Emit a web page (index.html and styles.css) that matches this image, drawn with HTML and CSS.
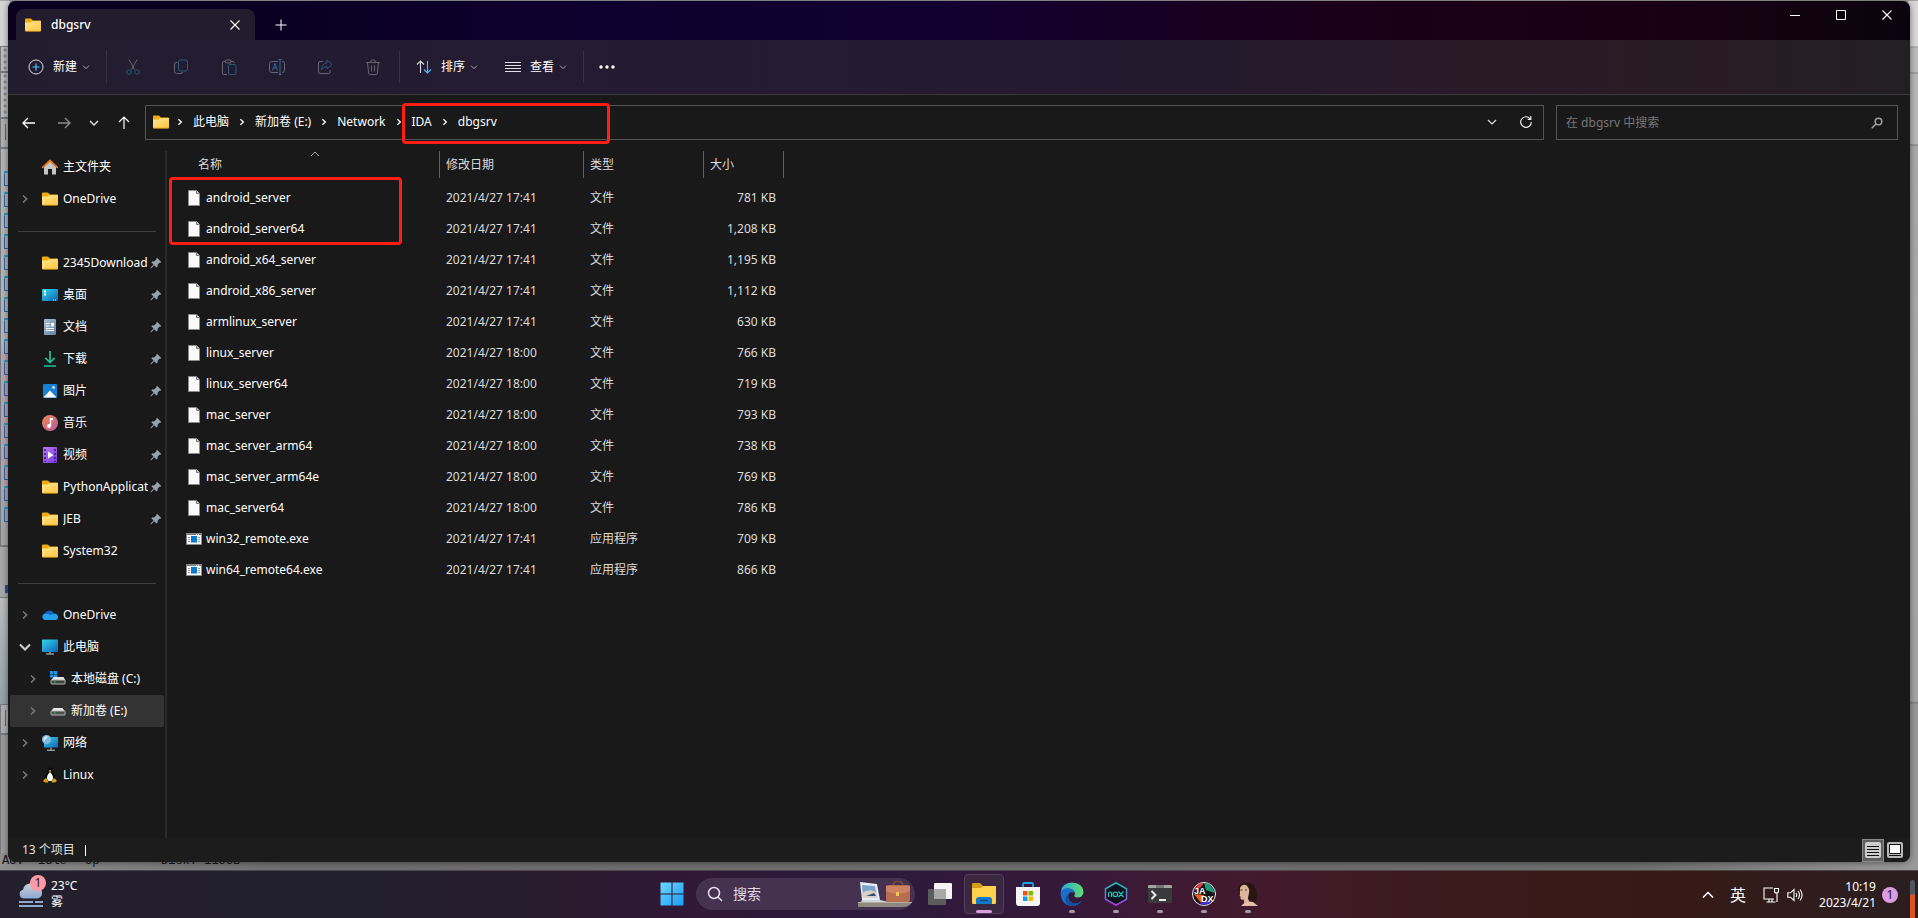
FILE: index.html
```html
<!DOCTYPE html>
<html lang="zh-CN">
<head>
<meta charset="utf-8">
<title>dbgsrv</title>
<link rel="stylesheet" href="styles.css">
</head>
<body>
<svg class="defs" aria-hidden="true">
  <defs>
    <linearGradient id="gFolder" x1="0" y1="0" x2="1" y2="1"><stop offset="0" stop-color="#ffe493"/><stop offset="1" stop-color="#ffc73e"/></linearGradient>
    <linearGradient id="gScreen" x1="0" y1="0" x2="1" y2="1"><stop offset="0" stop-color="#35d6ea"/><stop offset="1" stop-color="#0b63b8"/></linearGradient>
    <linearGradient id="gDoc" x1="0" y1="0" x2="1" y2="1"><stop offset="0" stop-color="#a9bdd2"/><stop offset="1" stop-color="#6683a4"/></linearGradient>
    <linearGradient id="gMusic" x1="0" y1="0" x2="1" y2="1"><stop offset="0" stop-color="#f0894f"/><stop offset="1" stop-color="#b45aa0"/></linearGradient>
    <linearGradient id="gVideo" x1="0" y1="0" x2="1" y2="1"><stop offset="0" stop-color="#b67bf3"/><stop offset="1" stop-color="#7a36dd"/></linearGradient>
    <linearGradient id="gWin" x1="0" y1="0" x2="1" y2="1"><stop offset="0" stop-color="#6ed5fb"/><stop offset="1" stop-color="#1a9df2"/></linearGradient>
    <linearGradient id="gEdge" x1="0" y1="0" x2="1" y2="0"><stop offset="0" stop-color="#2aa5dd"/><stop offset="1" stop-color="#5fdd6f"/></linearGradient>
    <linearGradient id="gNox" x1="0" y1="0" x2="0" y2="1"><stop offset="0" stop-color="#19c9c2"/><stop offset="1" stop-color="#b33be8"/></linearGradient>
    <linearGradient id="gCloud" x1="0" y1="0" x2="0" y2="1"><stop offset="0" stop-color="#c9ced6"/><stop offset="1" stop-color="#8fa9d0"/></linearGradient>
  </defs>
  <symbol id="folder" viewBox="0 0 16 14"><path d="M0 1.5Q0 .5 1 .5h4.5q.6 0 1 .5L8 2.5h7q1 0 1 1V8H0z" fill="#f0ab12"/><path d="M0 4.5h5.6L7.4 3H16v9.5q0 .8-1 .8H1q-1 0-1-.8z" fill="url(#gFolder)"/><path d="M0 12.2q0 1.3 1 1.3h14q1 0 1-1.3v.6H0z" fill="#e3a01a"/></symbol>
  <symbol id="chev-down" viewBox="0 0 8 8"><path d="M1 2.6l3 3 3-3" fill="none" stroke="currentColor"/></symbol>
  <symbol id="chev-right" viewBox="0 0 8 10"><path d="M2 1.5L5.7 5 2 8.5" fill="none" stroke="currentColor" stroke-width="1.6"/></symbol>
  <symbol id="close" viewBox="0 0 12 12"><path d="M1.5 1.5l9 9M10.5 1.5l-9 9" fill="none" stroke="currentColor" stroke-width="1.1"/></symbol>
  <symbol id="file" viewBox="0 0 16 16"><path d="M2.5.5h8l3 3v12h-11z" fill="#fafafa" stroke="#8b8b8b"/><path d="M10.5.5v3h3" fill="#ccc" stroke="#777"/></symbol>
  <symbol id="exe" viewBox="0 0 16 12"><path d="M.5.5h15v11H.5z" fill="#f8f8f8" stroke="#8a8a8a"/><path d="M1 1.5h14" stroke="#777"/><path d="M10 1.5h1m1 0h1" stroke="#fff"/><path d="M5 3h6v6.5H5z" fill="#0b78d4"/><path d="M2 4.5h2M2 6.5h2M2 8.5h2M12 4.5h2M12 6.5h2M12 8.5h2" stroke="#999"/></symbol>
  <symbol id="pin" viewBox="0 0 12 12"><path d="M7 .8L11.3 5l-1 .8-.6-.2-2 2-.2 2.2-.9.8-2.4-2.4L1 11.6l-.7-.7L3.5 7.6 1.3 5.3l.9-.9 2.3-.1 2-2-.2-.6z" fill="#97a2ab"/></symbol>
  <symbol id="home" viewBox="0 0 16 16"><path d="M2 7.5L8 2l6 5.5V15q0 .5-.5.5H10V10H6v5.5H2.5Q2 15.500 2 15z" fill="#c3c6c9"/><path d="M.8 8.300L8 1.500l7.200 6.800" fill="none" stroke="#e8731c" stroke-width="1.800" stroke-linecap="round" stroke-linejoin="round"/></symbol>
  <symbol id="desktop" viewBox="0 0 16 16"><rect y="2" width="16" height="12" rx="1" fill="url(#gScreen)"/><path d="M2 4.500h2M2 7.500h2" stroke="#fff" stroke-width="1.800"/><path d="M11 13h1m1 0h1" stroke="#cfe"/></symbol>
  <symbol id="doc" viewBox="0 0 16 16"><rect x="2" width="12" height="16" rx="1" fill="url(#gDoc)"/><path d="M4 4.500h3.500M4 7h3.500M4 9.500h8M4 11.500h8" stroke="#fff"/><path d="M9 4h3v3.500H9z" fill="#fff"/></symbol>
  <symbol id="download" viewBox="0 0 16 16"><path d="M8 0v11M3.300 6.800L8 11.500l4.700-4.700" fill="none" stroke="#22b890" stroke-width="1.800"/><path d="M2 15h12" stroke="#12a887" stroke-width="1.800"/></symbol>
  <symbol id="picture" viewBox="0 0 16 16"><rect x="1" y="1" width="14" height="14" rx="1" fill="#1780d2"/><path d="M1.500 14.500L8 7.500l6.500 7z" fill="#fff"/><circle cx="11.500" cy="4.500" r="1.300" fill="#fff"/></symbol>
  <symbol id="music" viewBox="0 0 16 16"><circle cx="8" cy="8" r="8" fill="url(#gMusic)"/><path d="M8.500 3v8" stroke="#fff" stroke-width="1.300"/><path d="M8.500 3h2.500v2.200H8.500z" fill="#fff"/><circle cx="7" cy="11" r="2" fill="#fff"/></symbol>
  <symbol id="video" viewBox="0 0 16 16"><rect x="1" width="14" height="16" rx="1" fill="url(#gVideo)"/><path d="M3 2v13M13 2v13" stroke="#3d1484" stroke-width="1.600" stroke-dasharray="2 2"/><path d="M6 4.500v7L11.500 8z" fill="#fff"/></symbol>
  <symbol id="cloud" viewBox="0 0 16 16"><path d="M3.500 13a3.500 3.500 0 0 1-.4-6.900A5 5 0 0 1 12 6.200L8 13z" fill="#0f66c4"/><path d="M3 13a3 3 0 0 1-1-5.500q3-1.500 6 .5l5-1.500q3 1 3 3.700Q15.700 13 13 13z" fill="#27a0ee"/></symbol>
  <symbol id="pc" viewBox="0 0 16 16"><rect y=".5" width="16" height="12.500" rx=".8" fill="url(#gScreen)"/><path d="M7 13h2v1.500H7z" fill="#777"/><path d="M4 15h8" stroke="#c9ced2"/></symbol>
  <symbol id="disk-win" viewBox="0 0 16 16"><path d="M0 0h3.300v3H0zM3.900 0h3.300v3H3.900zM0 3.600h3.300v3H0zM3.900 3.600h3.300v3H3.900z" fill="#1e97e8"/><path d="M3.500 6h10l2 3.500H1z" fill="#e4e4e4"/><rect x="1" y="9" width="14" height="4" rx=".5" fill="#3e433f" stroke="#b5b5b5"/><path d="M4 11h1.500" stroke="#2be34c"/></symbol>
  <symbol id="disk" viewBox="0 0 16 16"><path d="M3.500 5h9L15 8.500H1z" fill="#e9e9e9"/><rect x="1" y="8" width="14" height="4" rx=".5" fill="#4b504c" stroke="#b5b5b5"/><path d="M4 10h1.500" stroke="#2be34c"/></symbol>
  <symbol id="net" viewBox="0 0 16 16"><rect x="2" y="2" width="14" height="10.500" fill="url(#gScreen)"/><path d="M8 12.500h2v2H8z" fill="#777"/><path d="M5 15.200h8" stroke="#c9ced2"/><circle cx="4.500" cy="4.500" r="4.500" fill="#7ebbe0"/><path d="M1.500 3q2-2.500 4-2 .500 2-1.500 3-2 .500-1 3-2-1-1.500-4z" fill="#cdeaf8"/></symbol>
  <symbol id="linux" viewBox="0 0 16 16"><path d="M8 .5q2.500 0 2.500 3.500 0 1.500 2 4 1.500 3-.5 6H4q-2-3-.5-6 2-2.500 2-4Q5.500.5 8 .5z" fill="#080808"/><path d="M8 5q1.500 1 2.500 3.500 1.500 3-1 5.500h-3Q4 11.500 5.500 8.500 6.500 6 8 5z" fill="#fff"/><path d="M6.500 3.800L8 3l1.500.8L8 5.200z" fill="#e0a41c"/><path d="M1.500 13l2.500-2 2.500 3.500-1 1.200-3.800-.7zM14.500 13L12 11l-2.500 3.500 1 1.200 3.800-.7z" fill="#d99b12"/></symbol>
</svg>

<main class="desktop">
  <div class="backdrop" aria-hidden="true">
    <div class="strip-left">
      <div class="b-head"></div>
      <div class="b-bar"></div>
      <div class="b-bar b-tall"></div>
      <div class="b-tab"></div>
      <div class="b-list"></div>
      <div class="b-mid"></div>
      <div class="b-sky"></div>
      <div class="b-tab"></div>
      <div class="b-box"></div>
    </div>
    <div class="strip-right"></div>
    <div class="b-status"><span class="w1">AU:&nbsp; idle</span><span class="w2">Up</span><span class="w3">Disk: 113GB</span></div>
  </div>

  <section class="window">
    <header class="titlebar">
      <div class="tab">
        <svg class="i16"><use href="#folder"/></svg>
        <span class="tab-name">dbgsrv</span>
        <button class="plain" aria-label="关闭标签页"><svg class="i12"><use href="#close"/></svg></button>
      </div>
      <button class="plain tab-add" aria-label="新标签页"><svg class="i12" viewBox="0 0 12 12"><path d="M6 .5v11M.5 6h11" stroke="currentColor"/></svg></button>
      <div class="win-controls">
        <button class="plain" aria-label="最小化"><svg class="i12" viewBox="0 0 12 12"><path d="M1 6.500h10" stroke="currentColor"/></svg></button>
        <button class="plain" aria-label="最大化"><svg class="i12" viewBox="0 0 12 12"><path d="M1.500 1.500h9v9h-9z" fill="none" stroke="currentColor"/></svg></button>
        <button class="plain" aria-label="关闭"><svg class="i12"><use href="#close"/></svg></button>
      </div>
    </header>

    <div class="toolbar">
      <button class="cmd"><svg class="i16" viewBox="0 0 16 16" fill="none"><circle cx="8" cy="8" r="7" stroke="#d9d9dc"/><path d="M8 4.500v7M4.500 8h7" stroke="#4cc2ff" stroke-width="1.200"/></svg><span>新建</span><svg class="i8"><use href="#chev-down"/></svg></button>
      <span class="sep"></span>
      <div class="icon-cmds">
        <button class="plain" aria-label="剪切" disabled><svg class="i16" viewBox="0 0 16 16" fill="none"><path d="M4 .5l5.500 10M12 .5L6.500 10.500" stroke="#686470"/><circle cx="4" cy="13" r="2.300" stroke="#2d587e"/><circle cx="12" cy="13" r="2.300" stroke="#2d587e"/></svg></button>
        <button class="plain" aria-label="复制" disabled><svg class="i16" viewBox="0 0 16 16" fill="none"><path d="M4.500 3.500H3q-1.500 0-1.500 1.500v7.500Q1.500 14.500 3.500 14.500H8q1.500 0 1.700-1.500" stroke="#686470"/><rect x="5.500" y="1" width="9" height="11" rx="2" stroke="#2d587e"/></svg></button>
        <button class="plain" aria-label="粘贴" disabled><svg class="i16" viewBox="0 0 16 16" fill="none"><path d="M6 15.500H2.500q-1 0-1-1v-11q0-1 1-1H4M10 2.500h2q1 0 1 1V4" stroke="#686470"/><rect x="4.500" y="1" width="5.500" height="3" rx="1" stroke="#686470"/><rect x="7.500" y="5.500" width="7.500" height="10" rx="1.200" stroke="#2d587e"/></svg></button>
        <button class="plain" aria-label="重命名" disabled><svg class="i16" viewBox="0 0 16 16" fill="none"><path d="M9 2.500H2.500q-2 0-2 2v7q0 2 2 2H9M13 2.500q2.500 0 2.500 2v7q0 2-2.500 2" stroke="#686470"/><path d="M9.500.5h3M9.500 15.500h3M11 .5v15M3.500 11.500L6 4.500l2.500 7M4.300 9h3.400" stroke="#2d6ca0"/></svg></button>
        <button class="plain" aria-label="共享" disabled><svg class="i16" viewBox="0 0 16 16" fill="none"><path d="M6 2.500H3q-1.500 0-1.500 1.500v9q0 1.500 1.500 1.500h8.500q1.500 0 1.500-1.500v-2" stroke="#686470"/><path d="M10 1l5 4.500-5 4.500V7.500q-3.500 0-5.500 3Q5 4.500 10 3.800z" stroke="#2d587e"/></svg></button>
        <button class="plain" aria-label="删除" disabled><svg class="i16" viewBox="0 0 16 16" fill="none" stroke="#686470"><path d="M1 3.500h14M5.500 3.500Q5.500.8 8 .8t2.500 2.700M2.500 3.500l1.200 11q.1 1 1 1h6.600q.9 0 1-1l1.200-11M6.500 6.500v6M9.500 6.500v6"/></svg></button>
      </div>
      <span class="sep sep-close"></span>
      <button class="cmd"><svg class="i16" viewBox="0 0 16 16" fill="none"><path d="M4.500 14V2M1 5.500L4.500 2 8 5.500" stroke="#d9d9dc" stroke-width="1.100"/><path d="M11.500 2v12M8 10.500l3.500 3.500 3.500-3.500" stroke="#4cc2ff" stroke-width="1.100"/></svg><span>排序</span><svg class="i8"><use href="#chev-down"/></svg></button>
      <button class="cmd cmd-view"><svg class="i16" viewBox="0 0 16 16"><path d="M0 3.500h16M0 6.500h16M0 9.500h16M0 12.500h16" stroke="#e2e2e6"/></svg><span>查看</span><svg class="i8"><use href="#chev-down"/></svg></button>
      <span class="sep"></span>
      <button class="plain more" aria-label="更多"><svg class="i16" viewBox="0 0 16 16" fill="#fff"><circle cx="2" cy="8" r="1.700"/><circle cx="8" cy="8" r="1.700"/><circle cx="14" cy="8" r="1.700"/></svg></button>
    </div>

    <div class="navrow">
      <nav class="history">
        <button class="plain back" aria-label="后退"><svg class="i14" viewBox="0 0 14 14" fill="none" stroke="#fff" stroke-width="1.400"><path d="M1 7h12M6 2L1 7l5 5"/></svg></button>
        <button class="plain" aria-label="前进"><svg class="i14" viewBox="0 0 14 14" fill="none" stroke="#8a8a8a" stroke-width="1.400"><path d="M1 7h12M8 2l5 5-5 5"/></svg></button>
        <button class="plain" aria-label="最近的位置"><svg class="i10" viewBox="0 0 10 10" fill="none" stroke="#ddd" stroke-width="1.500"><path d="M1 3l4 4 4-4"/></svg></button>
        <button class="plain" aria-label="向上"><svg class="i14" viewBox="0 0 14 14" fill="none" stroke="#fff" stroke-width="1.200"><path d="M7 13V1M2 6l5-5 5 5"/></svg></button>
      </nav>
      <div class="address">
        <svg class="i16"><use href="#folder"/></svg>
        <ol class="crumbs">
          <li><svg class="crumb-sep"><use href="#chev-right"/></svg><a href="#">此电脑</a></li>
          <li><svg class="crumb-sep"><use href="#chev-right"/></svg><a href="#">新加卷 (E:)</a></li>
          <li><svg class="crumb-sep"><use href="#chev-right"/></svg><a href="#">Network</a></li>
          <li><svg class="crumb-sep"><use href="#chev-right"/></svg><a href="#">IDA</a></li>
          <li><svg class="crumb-sep"><use href="#chev-right"/></svg><a href="#">dbgsrv</a></li>
        </ol>
        <button class="plain addr-btn" aria-label="以前的位置"><svg class="i10" viewBox="0 0 10 10" fill="none" stroke="#ddd" stroke-width="1.200"><path d="M1 3l4 4 4-4"/></svg></button>
        <button class="plain addr-btn" aria-label="刷新"><svg class="i12" viewBox="0 0 12 12" fill="none" stroke="#eee" stroke-width="1.200"><path d="M10.200 2.800A5.300 5.300 0 1 0 11.300 6"/><path d="M10.800.3v3H7.700"/></svg></button>
      </div>
      <label class="search"><input type="text" placeholder="在 dbgsrv 中搜索" aria-label="搜索"><svg class="i12" viewBox="0 0 12 12" fill="none" stroke="#a0a0a0" stroke-width="1.500"><circle cx="7.500" cy="4.500" r="3.300"/><path d="M5 7L.7 11.300"/></svg></label>
    </div>

    <div class="content">
      <nav class="sidebar">
        <a class="item" href="#"><span class="exp"></span><svg class="i16"><use href="#home"/></svg><span class="label">主文件夹</span></a>
        <a class="item" href="#"><svg class="exp"><use href="#chev-right"/></svg><svg class="i16"><use href="#folder"/></svg><span class="label">OneDrive</span></a>
        <hr class="rule">
        <a class="item" href="#"><span class="exp"></span><svg class="i16"><use href="#folder"/></svg><span class="label">2345Download</span><svg class="pin"><use href="#pin"/></svg></a>
        <a class="item" href="#"><span class="exp"></span><svg class="i16"><use href="#desktop"/></svg><span class="label">桌面</span><svg class="pin"><use href="#pin"/></svg></a>
        <a class="item" href="#"><span class="exp"></span><svg class="i16"><use href="#doc"/></svg><span class="label">文档</span><svg class="pin"><use href="#pin"/></svg></a>
        <a class="item" href="#"><span class="exp"></span><svg class="i16"><use href="#download"/></svg><span class="label">下载</span><svg class="pin"><use href="#pin"/></svg></a>
        <a class="item" href="#"><span class="exp"></span><svg class="i16"><use href="#picture"/></svg><span class="label">图片</span><svg class="pin"><use href="#pin"/></svg></a>
        <a class="item" href="#"><span class="exp"></span><svg class="i16"><use href="#music"/></svg><span class="label">音乐</span><svg class="pin"><use href="#pin"/></svg></a>
        <a class="item" href="#"><span class="exp"></span><svg class="i16"><use href="#video"/></svg><span class="label">视频</span><svg class="pin"><use href="#pin"/></svg></a>
        <a class="item" href="#"><span class="exp"></span><svg class="i16"><use href="#folder"/></svg><span class="label">PythonApplicat</span><svg class="pin"><use href="#pin"/></svg></a>
        <a class="item" href="#"><span class="exp"></span><svg class="i16"><use href="#folder"/></svg><span class="label">JEB</span><svg class="pin"><use href="#pin"/></svg></a>
        <a class="item" href="#"><span class="exp"></span><svg class="i16"><use href="#folder"/></svg><span class="label">System32</span></a>
        <hr class="rule">
        <a class="item" href="#"><svg class="exp"><use href="#chev-right"/></svg><svg class="i16"><use href="#cloud"/></svg><span class="label">OneDrive</span></a>
        <a class="item" href="#"><svg class="exp exp-open" viewBox="0 0 10 8"><path d="M1 2l4 4 4-4" fill="none" stroke="currentColor" stroke-width="1.700"/></svg><svg class="i16"><use href="#pc"/></svg><span class="label">此电脑</span></a>
        <a class="item nested" href="#"><svg class="exp"><use href="#chev-right"/></svg><svg class="i16"><use href="#disk-win"/></svg><span class="label">本地磁盘 (C:)</span></a>
        <a class="item nested selected" href="#"><svg class="exp"><use href="#chev-right"/></svg><svg class="i16"><use href="#disk"/></svg><span class="label">新加卷 (E:)</span></a>
        <a class="item" href="#"><svg class="exp"><use href="#chev-right"/></svg><svg class="i16"><use href="#net"/></svg><span class="label">网络</span></a>
        <a class="item" href="#"><svg class="exp"><use href="#chev-right"/></svg><svg class="i16"><use href="#linux"/></svg><span class="label">Linux</span></a>
      </nav>
      <div class="files">
        <table>
          <colgroup><col class="c-name"><col class="c-date"><col class="c-type"><col class="c-size"></colgroup>
          <thead><tr>
            <th class="name"><div>名称<svg class="caret" viewBox="0 0 10 6" fill="none" stroke="#aaa"><path d="M1 5l4-4 4 4"/></svg></div></th>
            <th><div>修改日期</div></th><th><div>类型</div></th><th><div>大小</div></th>
          </tr></thead>
          <tbody>
            <tr><td><span class="fname"><svg class="i16"><use href="#file"/></svg>android_server</span></td><td>2021/4/27 17:41</td><td>文件</td><td>781 KB</td></tr>
            <tr><td><span class="fname"><svg class="i16"><use href="#file"/></svg>android_server64</span></td><td>2021/4/27 17:41</td><td>文件</td><td>1,208 KB</td></tr>
            <tr><td><span class="fname"><svg class="i16"><use href="#file"/></svg>android_x64_server</span></td><td>2021/4/27 17:41</td><td>文件</td><td>1,195 KB</td></tr>
            <tr><td><span class="fname"><svg class="i16"><use href="#file"/></svg>android_x86_server</span></td><td>2021/4/27 17:41</td><td>文件</td><td>1,112 KB</td></tr>
            <tr><td><span class="fname"><svg class="i16"><use href="#file"/></svg>armlinux_server</span></td><td>2021/4/27 17:41</td><td>文件</td><td>630 KB</td></tr>
            <tr><td><span class="fname"><svg class="i16"><use href="#file"/></svg>linux_server</span></td><td>2021/4/27 18:00</td><td>文件</td><td>766 KB</td></tr>
            <tr><td><span class="fname"><svg class="i16"><use href="#file"/></svg>linux_server64</span></td><td>2021/4/27 18:00</td><td>文件</td><td>719 KB</td></tr>
            <tr><td><span class="fname"><svg class="i16"><use href="#file"/></svg>mac_server</span></td><td>2021/4/27 18:00</td><td>文件</td><td>793 KB</td></tr>
            <tr><td><span class="fname"><svg class="i16"><use href="#file"/></svg>mac_server_arm64</span></td><td>2021/4/27 18:00</td><td>文件</td><td>738 KB</td></tr>
            <tr><td><span class="fname"><svg class="i16"><use href="#file"/></svg>mac_server_arm64e</span></td><td>2021/4/27 18:00</td><td>文件</td><td>769 KB</td></tr>
            <tr><td><span class="fname"><svg class="i16"><use href="#file"/></svg>mac_server64</span></td><td>2021/4/27 18:00</td><td>文件</td><td>786 KB</td></tr>
            <tr><td><span class="fname"><svg class="i16"><use href="#exe"/></svg>win32_remote.exe</span></td><td>2021/4/27 17:41</td><td>应用程序</td><td>709 KB</td></tr>
            <tr><td><span class="fname"><svg class="i16"><use href="#exe"/></svg>win64_remote64.exe</span></td><td>2021/4/27 17:41</td><td>应用程序</td><td>866 KB</td></tr>
          </tbody>
        </table>
      </div>
    </div>

    <footer class="statusbar">
      <span class="count">13 个项目</span>
      <div class="views">
        <button class="view active" aria-label="详细信息"><svg class="i16" viewBox="0 0 16 16"><rect width="16" height="16" rx="2" fill="#ccc"/><path d="M2 4.500h12M2 7.500h12M2 10.500h12M2 13.500h12" stroke="#111"/></svg></button>
        <button class="view" aria-label="大图标"><svg class="i16" viewBox="0 0 16 16"><rect width="16" height="16" rx="2" fill="#b9b9b9"/><path d="M2.500 2.500h11v9h-11z" fill="#fff" stroke="#111"/><path d="M2 13.500h12" stroke="#111"/></svg></button>
      </div>
    </footer>

    <div class="mark mark-path"></div>
    <div class="mark mark-files"></div>
  </section>
</main>

<footer class="taskbar">
  <button class="weather">
    <svg class="weather-icon" viewBox="0 0 28 26"><path d="M4.500 17.500a4.500 4.500 0 0 1-.5-8.800A8 8 0 0 1 18.500 6a6 6 0 0 1 .5 11.500z" fill="url(#gCloud)"/><path d="M0 21h14m2 0h8M0 25h24" stroke="#8ea9cc" stroke-width="1.800"/></svg>
    <span class="weather-badge">1</span>
    <span class="weather-text">23°C<br>雾</span>
  </button>
  <div class="apps">
    <button class="app" aria-label="开始"><svg class="i24" viewBox="0 0 24 24" fill="url(#gWin)"><path d="M.5.5h11v11H.5zM12.500.5h11v11h-11zM.5 12.500h11v11H.5zM12.500 12.500h11v11h-11z"/></svg></button>
    <label class="task-search">
      <svg class="i16" viewBox="0 0 16 16" fill="none" stroke="#e6e0ea" stroke-width="1.500"><circle cx="7" cy="7" r="5.500"/><path d="M11 11l4 4"/></svg>
      <input type="text" placeholder="搜索" aria-label="任务栏搜索">
      <svg class="highlight" viewBox="0 0 54 26"><path d="M0 21h54q-3 5-9 5H0z" fill="#8f8880"/><path d="M0 21h54v1H0z" fill="#b5aca1"/><path d="M2 1l17 2 3 16H4z" fill="#e6edf4"/><path d="M4 4l13 1 2 12H5z" fill="#7da3c9"/><path d="M4 12q7-5 14-1l1 6H5z" fill="#dbcfc9"/><path d="M8 15l8-3 2 3z" fill="#35506e"/><path d="M4 19h18l9 2H3z" fill="#cfd5dc"/><path d="M35 5q0-5 5-5t5 5" fill="none" stroke="#8c4a33" stroke-width="1.500"/><rect x="28" y="4" width="24" height="17" rx="2" fill="#b96d4f"/><path d="M28 5h24v5q-6 3-12 3t-12-3z" fill="#ce8463"/><path d="M38 11h3v4h-3z" fill="#f0c65b"/></svg>
    </label>
    <button class="app" aria-label="任务视图"><svg class="i24" viewBox="0 0 24 24"><rect x="6" y="1" width="18" height="16" rx="1" fill="#f4f4f4"/><rect y="7" width="18" height="16" rx="1" fill="#5c5c5c"/><path d="M6 7h12v10H6z" fill="#a9a9a9"/></svg></button>
    <button class="app current" aria-label="文件资源管理器"><svg class="i24" viewBox="0 0 24 24"><path d="M0 2q0-1 1-1h7l3 3h12q1 0 1 1v6H0z" fill="#d99a13"/><path d="M0 6h9l2-2h12q1 0 1 1v16q0 1-1 1H1q-1 0-1-1z" fill="#ffd04c"/><path d="M4 22v-4q0-3 3-3h10q3 0 3 3v4z" fill="#1479c9"/><path d="M8 18.500h8" stroke="#0b4f90" stroke-width="1.500"/></svg><i class="run"></i></button>
    <button class="app" aria-label="Microsoft Store"><svg class="i24" viewBox="0 0 24 24"><path d="M7 6V2q0-1 1-1h8q1 0 1 1v4" fill="none" stroke="#1c9fe8" stroke-width="1.800"/><path d="M0 5h24v16q0 3-3 3H3q-3 0-3-3z" fill="#f5f5f5"/><path d="M7 9h4.500v4.500H7z" fill="#f05022"/><path d="M12.500 9H17v4.500h-4.500z" fill="#7fba00"/><path d="M7 14.500h4.500V19H7z" fill="#00a4ef"/><path d="M12.500 14.500H17V19h-4.500z" fill="#ffb900"/></svg></button>
    <button class="app" aria-label="Edge"><svg class="i24" viewBox="0 0 24 24"><path d="M.5 11Q1.500.5 12 .5q11 .5 11.500 9.500-.5 5.500-6 5.500-4 0-3-2.500 1-2-.5-4-6-6-13.500 2z" fill="url(#gEdge)"/><path d="M.5 11Q3 5.500 9 6.500q4.500.5 5 4-5-1.500-6 3-.5 5 4.500 7.500 5 1.500 9-2-3 5-9.500 5Q1.500 23.500.5 11z" fill="#1b6fc9"/><path d="M8.500 13q-.5 5 4 8 5 1.500 9-2-3 5-9.500 5-8-1-6.500-8 1-3 3-3z" fill="#124f9e"/></svg><i class="run"></i></button>
    <button class="app" aria-label="Nox"><svg class="i24" viewBox="0 0 24 24"><path d="M12 .8l10.500 6v10.400L12 23.200 1.500 17.200V6.800z" fill="#10131c" stroke="url(#gNox)" stroke-width="1.500"/><path d="M4.500 15v-3.500q0-1.500 1.500-1.500t1.500 1.500V15M14.500 9.500l5 5.500M19.500 9.500l-5 5.500" fill="none" stroke="#25c7b8" stroke-width="1.200"/><circle cx="11.300" cy="12.300" r="2.300" fill="none" stroke="#25c7b8" stroke-width="1.200"/></svg><i class="run"></i></button>
    <button class="app" aria-label="终端"><svg class="i24" viewBox="0 0 24 24"><rect y="3" width="24" height="18" rx="1.500" fill="#3a3a3c"/><path d="M0 6V4q0-1 1-1h22q1 0 1 1v2z" fill="#a3a3a3"/><path d="M8 3h8v3H8z" fill="#777"/><path d="M3.500 9l4 4-4 4" fill="none" stroke="#e8e8e8" stroke-width="2"/><path d="M11 18h7" stroke="#fff" stroke-width="1.800"/></svg><i class="run"></i></button>
    <button class="app" aria-label="JADX"><svg class="i24" viewBox="0 0 24 24"><circle cx="12" cy="12" r="11.500" fill="#17151a" stroke="#eee"/><path d="M2 12l10 1-3 8z" fill="#ee5d26"/><path d="M12 1a11 11 0 0 1 10.500 10L14 8z" fill="#199e77"/><path d="M2 9Q5 1 12 1l-3 4z" fill="#e23a3f"/><path d="M8 22q4-4 12-3-5 5-12 3z" fill="#4b2be0"/><text x="2" y="12" class="jadx">JA</text><text x="9" y="20" class="jadx">DX</text></svg><i class="run"></i></button>
    <button class="app" aria-label="IDA"><svg class="i24" viewBox="0 0 24 24"><path d="M2 9Q1 1 10 .5q8 0 10 7 3 9-1 13l-6-3-7-8z" fill="#271710"/><path d="M4 6q2-4 6-3 4 3 3 8-1 4-1 6l4 7H7q2-4 .5-6.500-3.500 1-3-3-1.500-.5-.5-2.500z" fill="#ddb599"/><path d="M5 24q5-5 12-4l5 4z" fill="#e3c1a6"/><path d="M4.500 8h2M9 8h2" stroke="#513023"/></svg><i class="run"></i></button>
  </div>
  <div class="tray">
    <button class="plain" aria-label="显示隐藏的图标"><svg class="i12" viewBox="0 0 12 12" fill="none" stroke="#fff" stroke-width="1.500"><path d="M1 8.500l5-5 5 5"/></svg></button>
    <button class="plain ime">英</button>
    <button class="plain net-vol" aria-label="网络和音量">
      <svg class="i16" viewBox="0 0 16 16" fill="none" stroke="#fff" stroke-width="1.100"><path d="M10 1H1v11h10M3.500 15h9M6 12v3M9 12v3M14 6.500V15M11.500 1.500h4V4q0 2-2 2t-2-2z"/></svg>
      <svg class="i16" viewBox="0 0 16 16" fill="none" stroke="#fff" stroke-width="1.100"><path d="M.8 5.800h2.700L7 2.500v11L3.500 10.200H.8zM9 6q1.500 2 0 4M11 4q3 4 0 8M13 2.500q4.200 5.500 0 11"/></svg>
    </button>
    <button class="plain clock">10:19<br>2023/4/21</button>
    <span class="notify">1</span>
    <span class="meter"></span>
  </div>
</footer>
</body>
</html>
```
FILE: styles.css
```css
* { box-sizing: border-box; }
html, body { height: 100%; }
body {
  margin: 0;
  display: flex;
  flex-direction: column;
  overflow: hidden;
  font: 12px/16px "Noto Sans", "Noto Sans CJK SC", sans-serif;
  color: #fff;
  background: #8a8a8a;
}
.defs { position: absolute; width: 0; height: 0; }
svg { flex: none; display: block; }
a { color: inherit; text-decoration: none; }
button, input { font: inherit; color: inherit; border: 0; background: none; padding: 0; margin: 0; }
.plain { display: flex; align-items: center; justify-content: center; }
.i8 { width: 8px; height: 8px; }
.i10 { width: 10px; height: 10px; }
.i12 { width: 12px; height: 12px; }
.i14 { width: 14px; height: 14px; }
.i16 { width: 16px; height: 16px; }
.i24 { width: 24px; height: 24px; }

/* desktop and the application behind the window */
.desktop { position: relative; flex: 1; min-height: 0; display: flex; padding: 1px 8px 8px; }
.backdrop { position: absolute; inset: 0; background: linear-gradient(90deg, #8e8e8e, #6e6e6e 15%, #6e6e6e 85%, #999); border-top: 1px solid #a3a3a3; }
.strip-left { position: absolute; inset: 0 auto 0 0; width: 10px; display: flex; flex-direction: column; background: #b5b5b5; }
.strip-left > div { border: 1px solid #777b80; border-right: 0; }
.strip-left > .b-head { height: 45px; border: 0; background: #d6d6d6; }
.b-bar { height: 26px; background: radial-gradient(circle, #888 1px, transparent 2px) 1px 0 / 6px 6px repeat-y #bcbcbc; }
.b-bar.b-tall { height: 46px; }
.b-tab { height: 30px; background: linear-gradient(#2089b8, #2468b5) 4px 5px / 1px 16px no-repeat #b0b0b0; }
.b-list { height: 398px; background: repeating-linear-gradient(#2f9cc0 0 3px, #2f62ad 3px 15px, transparent 15px 21px) 3px 22px / 1px 351px no-repeat, repeating-linear-gradient(#2f9cc0 0 2px, transparent 2px 14px, #2f62ad 14px 15px, transparent 15px 21px) 4px 22px / 5px 351px no-repeat, linear-gradient(#b5b5b5 50%, #b9a3ae 52%, #b9a3ae 86%, #a8a8a8 88%); }
.strip-left > .b-mid { height: 52px; border-width: 1px 0; background: linear-gradient(#24509f, #24509f) 5px 38px / 3px 8px no-repeat #a8a8a8; }
.strip-left > .b-sky { height: 106px; border: 0; background: linear-gradient(#bdbdbd, #92a2a8); }
.b-box { flex: 1; background: #9c9c9c; }
.strip-right { position: absolute; inset: 0 0 0 auto; width: 10px; background: linear-gradient(#d9d9d9 45px, #999 46px, #bcbcbc 47px, #bcbcbc 71px, #888 72px, #b8b8b8 73px, #b8b8b8 143px, #777 144px, #aaa 145px, #a5a5a5 700px, #777 702px, #9a9a9a 703px); }
.b-status { position: absolute; left: 0; right: 0; bottom: 0; height: 17px; display: flex; padding-left: 2px; background: linear-gradient(90deg, #8e8e8e, #6e6e6e 15%, #6e6e6e 85%, #999); font: 12px/16px "Liberation Mono", monospace; color: #151515; }
.b-status .w1 { width: 83px; }
.b-status .w2 { width: 76px; }

/* explorer window */
.window {
  position: relative;
  flex: 1;
  min-width: 0;
  display: flex;
  flex-direction: column;
  border-radius: 8px;
  overflow: hidden;
  background: #191919;
  box-shadow: 0 0 6px rgba(0, 0, 0, .5);
}
.titlebar { flex: none; display: flex; height: 39px; background: linear-gradient(90deg, #090020 10%, #0e002e 30%, #120030 50%, #1a0018 70%, #1b0014 85%, #0b040e); }
.tab { display: flex; align-items: center; width: 239px; margin: 8px 0 0 8px; padding: 0 14px 0 9px; border-radius: 8px 8px 0 0; background: #211d2e; }
.tab-name { flex: 1; padding-left: 10px; font-weight: 500; }
.tab-add { width: 32px; margin: 8px 0 0 10px; }
.win-controls { display: flex; margin-left: auto; height: 28px; }
.win-controls .plain { width: 46px; }

.toolbar { flex: none; display: flex; align-items: center; height: 55px; padding-left: 20px; border-bottom: 1px solid #3b383d; background: linear-gradient(90deg, #211d2e, #241b33 35%, #25192e 60%, #281a28 76%, #281c22 90%, #221f22); }
.cmd { display: flex; align-items: center; gap: 5px; }
.cmd span { padding-left: 4px; }
.cmd .i8 { color: #a9a7b0; }
.cmd-view { margin-left: 27px; }
.sep { width: 1px; height: 32px; margin: 0 2px 0 16px; background: #38343f; }
.sep-close { margin: 0 16px 0 2px; }
.icon-cmds { display: flex; }
.icon-cmds .plain { width: 48px; height: 32px; }
.more { margin-left: 13px; }

.navrow { flex: none; display: flex; align-items: center; height: 56px; padding: 0 12px 1px 6px; }
.history { display: flex; margin-right: 6px; }
.history .plain { width: 30px; height: 30px; }
.history .back { margin-right: 5px; }
.address { flex: 1; display: flex; align-items: center; height: 35px; padding: 0 0 1px 7px; border: 1px solid #535353; }
.crumbs { flex: 1; display: flex; margin: 0 0 0 -2px; padding: 0; list-style: none; }
.crumbs li { display: flex; align-items: center; }
.crumb-sep { width: 8px; height: 8px; margin: 0 9px; }
.addr-btn { width: 34px; height: 32px; }
.search { display: flex; align-items: center; width: 342px; height: 35px; margin-left: 12px; padding: 0 14px 0 9px; border: 1px solid #535353; }
.search input { flex: 1; min-width: 0; }
.search input::placeholder { color: #777; opacity: 1; }

.content { flex: 1; min-height: 0; display: flex; }
.sidebar { width: 159px; flex: none; padding: 0 1px 0 2px; border-right: 2px solid #2a2a2a; }
.item { display: flex; align-items: center; gap: 5px; height: 32px; padding: 0 2px 0 8px; }
.item.nested { padding-left: 16px; }
.item.selected { background: #333; border-radius: 2px; }
.exp { flex: none; width: 14px; height: 10px; margin-right: 5px; color: #777; }
.exp-open { color: #ccc; }
.label { flex: 1; min-width: 0; overflow: hidden; white-space: nowrap; }
.pin { width: 12px; height: 12px; margin-left: -3px; }
.rule { height: 1px; margin: 16px 8px 15px 8px; border: 0; background: #3f3f3f; }

.files { flex: 1; min-width: 0; padding-left: 1px; }
table { width: 616px; table-layout: fixed; border-collapse: collapse; color: #dcdcdc; }
.c-name { width: 272px; }
.c-date { width: 144px; }
.c-type { width: 120px; }
.c-size { width: 80px; }
th { height: 31px; padding: 0; vertical-align: top; font-weight: 400; text-align: left; }
th div { position: relative; height: 27px; padding-left: 6px; line-height: 27px; border-right: 1px solid #5f5f5f; }
th.name div { padding-left: 30px; }
.caret { position: absolute; left: 142px; top: 0; width: 10px; height: 6px; }
td { height: 31px; padding: 0 0 0 6px; white-space: nowrap; }
td:first-child { padding-left: 18px; color: #fff; }
td:last-child { padding: 0 8px 0 0; text-align: right; }
.fname { display: flex; align-items: center; gap: 4px; }

.statusbar { flex: none; display: flex; align-items: center; justify-content: space-between; height: 24px; padding: 0 7px 0 14px; background: #1c1c1c; color: #e0e0e0; }
.count { padding-right: 11px; background: linear-gradient(#fff, #fff) right center / 1px 11px no-repeat; }
.views { display: flex; gap: 3px; }
.view { display: flex; align-items: center; justify-content: center; width: 16px; height: 23px; }
.view.active { width: 22px; background: #606060; border: 1px solid #8a8a8a; }

.mark { position: absolute; border: 3px solid #ff1e14; border-radius: 4px; pointer-events: none; }
.mark-path { left: 394px; top: 102px; width: 208px; height: 41px; }
.mark-files { left: 161px; top: 176px; width: 233px; height: 68px; }

/* taskbar */
.taskbar {
  flex: none;
  display: grid;
  grid-template-columns: 1fr auto 1fr;
  height: 48px;
  border-top: 1px solid #4a474c;
  background: linear-gradient(90deg, #231f2d, #221f2e 20%, #2a1a2e 30%, #301838 36%, #2c1a3c 45%, #35193a 55%, #431a2e 65%, #3c1a1c 75%, #371a16 87%, #2a1e20);
}
.weather { position: relative; display: flex; align-items: center; gap: 4px; justify-self: start; height: 46px; padding-left: 19px; text-align: left; }
.weather-icon { width: 28px; height: 26px; }
.weather-badge { position: absolute; left: 30px; top: 4px; width: 16px; height: 16px; border-radius: 50%; background: #ff9aa5; color: #1a1a1a; text-align: center; }
.apps { display: flex; align-items: center; height: 46px; padding-left: 2px; }
.app { position: relative; display: flex; align-items: center; justify-content: center; width: 44px; height: 46px; }
.app.current { width: 40px; height: 40px; margin: 0 2px; border: 1px solid #54405a; border-radius: 4px; background: #3c2743; }
.run { position: absolute; left: 50%; bottom: 4px; width: 6px; height: 3px; margin-left: -3px; border-radius: 2px; background: #a79aa8; }
.current .run { bottom: 0; width: 16px; margin-left: -8px; background: #dd9be0; }
.task-search { display: flex; align-items: center; gap: 10px; width: 219px; height: 32px; margin: 0 3px 0 2px; padding: 0 3px 0 11px; border-radius: 16px; background: #453150; overflow: hidden; }
.task-search input { flex: 1; min-width: 0; font-size: 14px; }
.task-search input::placeholder { color: #e3dce6; opacity: 1; }
.highlight { width: 54px; height: 26px; }
.jadx { font: 700 9px "Liberation Sans", sans-serif; fill: #fff; }
.tray { display: flex; align-items: center; justify-content: flex-end; }
.ime { margin: 0 17px 0 16px; font-size: 16px; }
.net-vol { gap: 8px; }
.clock { display: block; margin-left: 16px; text-align: right; }
.notify { width: 16px; height: 16px; margin: 0 12px 0 6px; border-radius: 50%; background: #dd9be0; color: #1a1a1a; text-align: center; }
.meter { align-self: flex-end; width: 5px; height: 38px; margin-right: 3px; border-radius: 3px 3px 0 0; background: linear-gradient(#4b5660 14px, #d9541e 15px); }
```
